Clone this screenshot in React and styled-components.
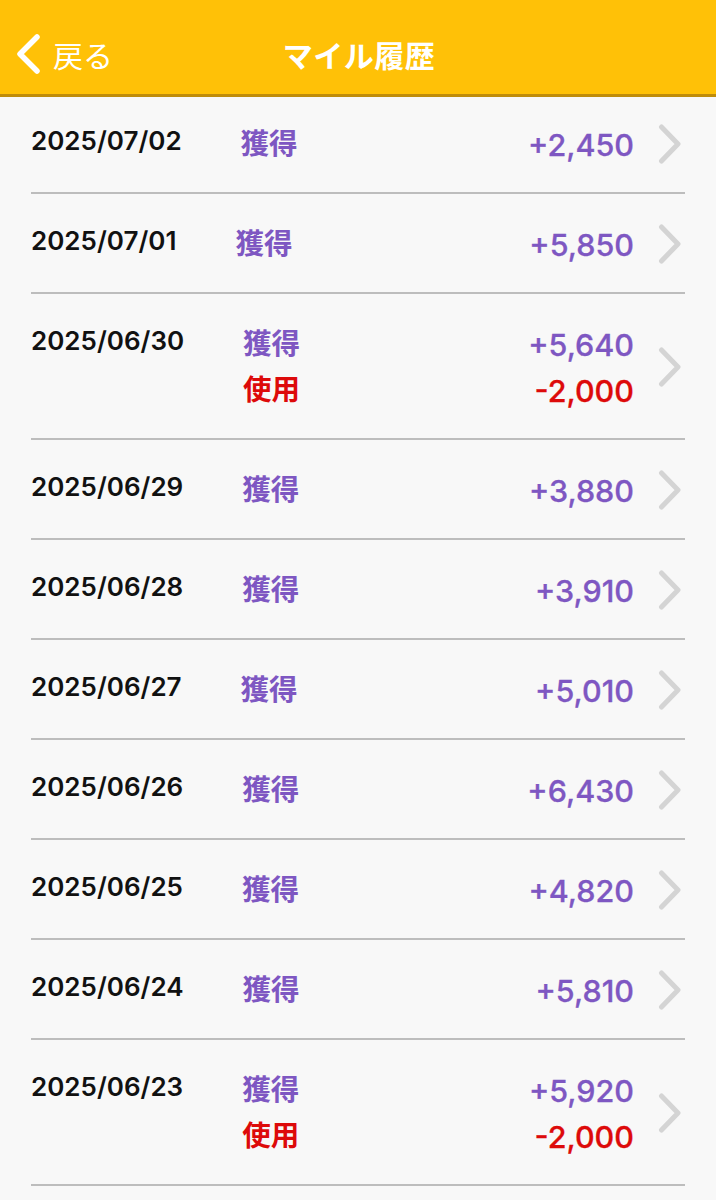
import React from "react"
import styled, { createGlobalStyle } from "styled-components"

const GlobalStyle = createGlobalStyle`
  html, body {
    margin: 0;
    padding: 0;
    background: #f8f8f8;
  }
  body {
    font-family: Inter, "Noto Sans CJK JP", sans-serif;
  }
`

const Page = styled.div`
  width: 716px;
  min-height: 1200px;
  background: #f8f8f8;
`

const Header = styled.header`
  position: relative;
  height: 94px;
  box-sizing: border-box;
  padding-top: 14px;
  background: #ffc107;
  box-shadow: 0 3px 0 #bf8c0a;
  display: flex;
  align-items: center;
  justify-content: center;
`

const BackButton = styled.div`
  position: absolute;
  left: 14px;
  top: 14px;
  bottom: 0;
  display: flex;
  align-items: center;
  gap: 11px;
  color: #fff;
  font-family: "Noto Sans CJK JP", sans-serif;
  font-size: 30px;
  font-weight: 400;
`

const Title = styled.h1`
  margin: 0 0 0 2px;
  color: #fff;
  font-family: "Noto Sans CJK JP", sans-serif;
  font-size: 30px;
  font-weight: 700;
  letter-spacing: 0.5px;
`

const List = styled.ul`
  list-style: none;
  margin: 0;
  padding: 0 31px;
`

const Row = styled.li`
  display: flex;
  align-items: flex-start;
  padding: 27px 3px 25px 0;
  border-bottom: 2px solid #bdbdbd;
`

const DateText = styled.div`
  flex: none;
  font-family: Inter, sans-serif;
  font-size: 26px;
  font-weight: 600;
  line-height: 40px;
  color: #111;
`

const Entries = styled.div`
  flex: 1;
  margin-left: 59px;
  display: flex;
  flex-direction: column;
`

const Entry = styled.div`
  display: flex;
  justify-content: space-between;
  align-items: center;
  height: 46px;
  color: ${p => (p.$kind === "use" ? "#dd0a0a" : "#7e57c2")};
`

const Label = styled.span`
  font-family: "Noto Sans CJK JP", sans-serif;
  font-size: 28.5px;
  font-weight: 700;
  line-height: 40px;
  margin-top: -4px;
`

const Amount = styled.span`
  font-family: Inter, sans-serif;
  font-size: 30.5px;
  font-weight: 500;
  -webkit-text-stroke: 0.3px currentColor;
`

const Chevron = styled.svg`
  flex: none;
  align-self: center;
  margin-left: 24px;
`

const BackIcon = () => (
  <svg width="28" height="42" viewBox="0 0 28 42">
    <path d="M23 4 L6 21 L23 38" fill="none" stroke="#fff" strokeWidth="5.5" strokeLinecap="round" strokeLinejoin="round" />
  </svg>
)

const RowChevron = () => (
  <Chevron width="24" height="40" viewBox="0 0 24 40">
    <path d="M3.5 3 L20 20 L3.5 37" fill="none" stroke="#d4d4d4" strokeWidth="5" strokeLinecap="round" strokeLinejoin="round" />
  </Chevron>
)

const history = [
  { date: "2025/07/02", items: [{ kind: "earn", amount: "+2,450" }] },
  { date: "2025/07/01", items: [{ kind: "earn", amount: "+5,850" }] },
  { date: "2025/06/30", items: [{ kind: "earn", amount: "+5,640" }, { kind: "use", amount: "-2,000" }] },
  { date: "2025/06/29", items: [{ kind: "earn", amount: "+3,880" }] },
  { date: "2025/06/28", items: [{ kind: "earn", amount: "+3,910" }] },
  { date: "2025/06/27", items: [{ kind: "earn", amount: "+5,010" }] },
  { date: "2025/06/26", items: [{ kind: "earn", amount: "+6,430" }] },
  { date: "2025/06/25", items: [{ kind: "earn", amount: "+4,820" }] },
  { date: "2025/06/24", items: [{ kind: "earn", amount: "+5,810" }] },
  { date: "2025/06/23", items: [{ kind: "earn", amount: "+5,920" }, { kind: "use", amount: "-2,000" }] },
]

const App = () => {
  return (
    <Page>
      <GlobalStyle />
      <Header>
        <BackButton>
          <BackIcon />
          <span>戻る</span>
        </BackButton>
        <Title>マイル履歴</Title>
      </Header>
      <List>
        {history.map(day => (
          <Row key={day.date}>
            <DateText>{day.date}</DateText>
            <Entries>
              {day.items.map(item => (
                <Entry key={item.kind} $kind={item.kind}>
                  <Label>{item.kind === "use" ? "使用" : "獲得"}</Label>
                  <Amount>{item.amount}</Amount>
                </Entry>
              ))}
            </Entries>
            <RowChevron />
          </Row>
        ))}
      </List>
    </Page>
  )
}

export default App
